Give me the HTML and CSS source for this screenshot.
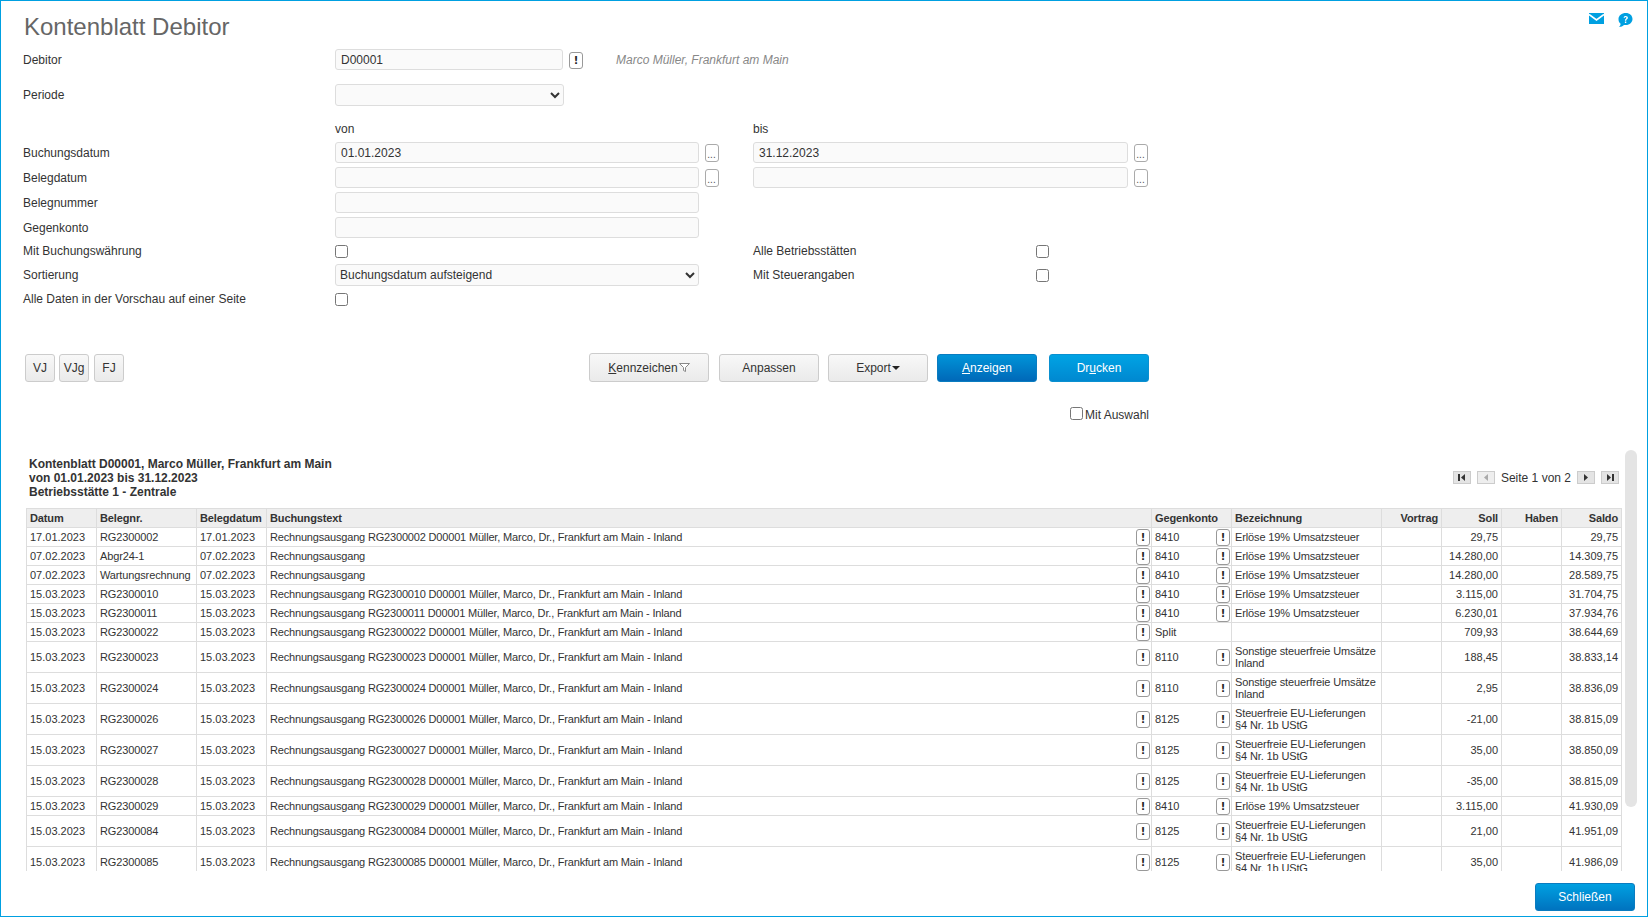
FILE: index.html
```html
<!DOCTYPE html>
<html lang="de">
<head>
  <meta charset="UTF-8">
  <meta name="viewport" content="width=device-width, initial-scale=1.0">
  <title>Kontenblatt Debitor</title>
  <link rel="stylesheet" href="styles.css">
</head>
<body>
<div class="window">
  <div class="page-head">
    <h1 class="page-title">Kontenblatt Debitor</h1>
    <div class="head-icons">
      <svg class="icon-mail" width="15" height="11" viewBox="0 0 15 11"><rect width="15" height="11" fill="#00a0e1"/><path d="M0 1.500L7.500 7 15 1.500" fill="none" stroke="#fff" stroke-width="1.600"/></svg>
      <svg class="icon-help" width="15" height="14" viewBox="0 0 15 14"><path d="M7.800 0C11.700 0 14.500 2.600 14.500 6c0 3.300-2.800 6-6.700 6H6C4.800 13.200 3.200 14 1 14c1-.8 1.500-1.800 1.600-3.200C1 9.600 .5 7.900 .5 6 .5 2.600 3.800 0 7.800 0z" fill="#00a0e1"/><path d="M5.600 4.800C5.700 3.500 6.600 3 7.700 3 9 3 9.900 3.700 9.900 4.800c0 1.500-1.700 1.500-1.700 3H6.900c0-2 1.500-2 1.500-3 0-.5-.3-.7-.7-.7-.5 0-.7.300-.8.700zM6.900 8.500h1.400V10H6.900z" fill="#fff"/></svg>
    </div>
  </div>

  <div class="form">
    <div class="form-row row-debitor">
      <label>Debitor</label>
      <div class="debitor-field">
        <input class="input input-short" type="text" value="D00001">
        <button class="mark-btn" type="button">!</button>
        <span class="debitor-name">Marco Müller, Frankfurt am Main</span>
      </div>
    </div>
    <div class="form-row row-periode">
      <label>Periode</label>
      <select class="input select input-period"><option></option></select>
    </div>
    <div class="form-row row-caption">
      <span></span>
      <span>von</span>
      <span></span>
      <span>bis</span>
    </div>
    <div class="form-row row-field">
      <label>Buchungsdatum</label>
      <input class="input" type="text" value="01.01.2023">
      <button class="dots-btn" type="button">...</button>
      <input class="input" type="text" value="31.12.2023">
      <button class="dots-btn" type="button">...</button>
    </div>
    <div class="form-row row-field">
      <label>Belegdatum</label>
      <input class="input" type="text">
      <button class="dots-btn" type="button">...</button>
      <input class="input" type="text">
      <button class="dots-btn" type="button">...</button>
    </div>
    <div class="form-row row-field">
      <label>Belegnummer</label>
      <input class="input" type="text">
    </div>
    <div class="form-row row-field">
      <label>Gegenkonto</label>
      <input class="input" type="text">
    </div>
    <div class="form-row row-check">
      <label>Mit Buchungswährung</label>
      <div><input type="checkbox"></div>
      <span></span>
      <div class="check-pair"><label>Alle Betriebsstätten</label><input type="checkbox"></div>
    </div>
    <div class="form-row row-select">
      <label>Sortierung</label>
      <select class="input select"><option>Buchungsdatum aufsteigend</option></select>
      <span></span>
      <div class="check-pair"><label>Mit Steuerangaben</label><input type="checkbox"></div>
    </div>
    <div class="form-row row-check">
      <label>Alle Daten in der Vorschau auf einer Seite</label>
      <div><input type="checkbox"></div>
    </div>
  </div>

  <div class="actions">
    <div class="quick-btns">
      <button class="btn btn-quick" type="button">VJ</button>
      <button class="btn btn-quick" type="button">VJg</button>
      <button class="btn btn-quick" type="button">FJ</button>
    </div>
    <div class="main-btns">
      <button class="btn btn-flag" type="button"><u>K</u>ennzeichen<svg class="icon-filter" width="11" height="9" viewBox="0 0 11 9"><path d="M.5.5h10L6.500 4.500V8.500L4.500 7.500V4.500z" fill="#fff" stroke="#888"/></svg></button>
      <button class="btn btn-adjust" type="button">Anpassen</button>
      <button class="btn btn-export" type="button">Export<span class="caret"></span></button>
      <button class="btn btn-primary btn-show" type="button"><u>A</u>nzeigen</button>
      <button class="btn btn-primary btn-print" type="button">Dr<u>u</u>cken</button>
    </div>
  </div>
  <div class="select-row">
    <input type="checkbox"><label>Mit Auswahl</label>
  </div>

  <div class="report">
    <div class="scroll-thumb"></div>
    <div class="report-head">
      <div class="report-title">Kontenblatt D00001, Marco Müller, Frankfurt am Main<br>von 01.01.2023 bis 31.12.2023<br>Betriebsstätte 1 - Zentrale</div>
      <div class="pager">
        <span class="pager-btn"><svg width="8" height="7" viewBox="0 0 8 7"><path d="M0 0h2v7H0zM7 0v7L3 3.500z" fill="#333"/></svg></span>
        <span class="pager-btn pager-off"><svg width="8" height="7" viewBox="0 0 8 7"><path d="M6 0v7L2 3.500z" fill="#aaa"/></svg></span>
        <span class="pager-text">Seite 1 von 2</span>
        <span class="pager-btn"><svg width="8" height="7" viewBox="0 0 8 7"><path d="M2 0v7l4-3.500z" fill="#333"/></svg></span>
        <span class="pager-btn"><svg width="8" height="7" viewBox="0 0 8 7"><path d="M1 0v7l4-3.500zM6 0h2v7H6z" fill="#333"/></svg></span>
      </div>
    </div>
    <table class="ledger">
      <colgroup>
        <col class="c-date"><col class="c-no"><col class="c-date"><col class="c-text"><col class="c-acc"><col class="c-desc"><col class="c-num"><col class="c-num"><col class="c-num"><col class="c-num">
      </colgroup>
      <thead>
        <tr><th>Datum</th><th>Belegnr.</th><th>Belegdatum</th><th>Buchungstext</th><th>Gegenkonto</th><th>Bezeichnung</th><th class="num">Vortrag</th><th class="num">Soll</th><th class="num">Haben</th><th class="num">Saldo</th></tr>
      </thead>
      <tbody>
        <tr><td>17.01.2023</td><td class="tight">RG2300002</td><td>17.01.2023</td><td class="text"><div class="cell-flex">Rechnungsausgang RG2300002 D00001 Müller, Marco, Dr., Frankfurt am Main - Inland<button class="mark-btn" type="button">!</button></div></td><td><div class="cell-flex">8410<button class="mark-btn" type="button">!</button></div></td><td class="tight">Erlöse 19% Umsatzsteuer</td><td></td><td class="num">29,75</td><td></td><td class="num">29,75</td></tr>
        <tr><td>07.02.2023</td><td class="tight">Abgr24-1</td><td>07.02.2023</td><td class="text"><div class="cell-flex">Rechnungsausgang<button class="mark-btn" type="button">!</button></div></td><td><div class="cell-flex">8410<button class="mark-btn" type="button">!</button></div></td><td class="tight">Erlöse 19% Umsatzsteuer</td><td></td><td class="num">14.280,00</td><td></td><td class="num">14.309,75</td></tr>
        <tr><td>07.02.2023</td><td class="tight">Wartungsrechnung</td><td>07.02.2023</td><td class="text"><div class="cell-flex">Rechnungsausgang<button class="mark-btn" type="button">!</button></div></td><td><div class="cell-flex">8410<button class="mark-btn" type="button">!</button></div></td><td class="tight">Erlöse 19% Umsatzsteuer</td><td></td><td class="num">14.280,00</td><td></td><td class="num">28.589,75</td></tr>
        <tr><td>15.03.2023</td><td class="tight">RG2300010</td><td>15.03.2023</td><td class="text"><div class="cell-flex">Rechnungsausgang RG2300010 D00001 Müller, Marco, Dr., Frankfurt am Main - Inland<button class="mark-btn" type="button">!</button></div></td><td><div class="cell-flex">8410<button class="mark-btn" type="button">!</button></div></td><td class="tight">Erlöse 19% Umsatzsteuer</td><td></td><td class="num">3.115,00</td><td></td><td class="num">31.704,75</td></tr>
        <tr><td>15.03.2023</td><td class="tight">RG2300011</td><td>15.03.2023</td><td class="text"><div class="cell-flex">Rechnungsausgang RG2300011 D00001 Müller, Marco, Dr., Frankfurt am Main - Inland<button class="mark-btn" type="button">!</button></div></td><td><div class="cell-flex">8410<button class="mark-btn" type="button">!</button></div></td><td class="tight">Erlöse 19% Umsatzsteuer</td><td></td><td class="num">6.230,01</td><td></td><td class="num">37.934,76</td></tr>
        <tr><td>15.03.2023</td><td class="tight">RG2300022</td><td>15.03.2023</td><td class="text"><div class="cell-flex">Rechnungsausgang RG2300022 D00001 Müller, Marco, Dr., Frankfurt am Main - Inland<button class="mark-btn" type="button">!</button></div></td><td>Split</td><td></td><td></td><td class="num">709,93</td><td></td><td class="num">38.644,69</td></tr>
        <tr class="tall"><td>15.03.2023</td><td class="tight">RG2300023</td><td>15.03.2023</td><td class="text"><div class="cell-flex">Rechnungsausgang RG2300023 D00001 Müller, Marco, Dr., Frankfurt am Main - Inland<button class="mark-btn" type="button">!</button></div></td><td><div class="cell-flex">8110<button class="mark-btn" type="button">!</button></div></td><td class="tight">Sonstige steuerfreie Umsätze Inland</td><td></td><td class="num">188,45</td><td></td><td class="num">38.833,14</td></tr>
        <tr class="tall"><td>15.03.2023</td><td class="tight">RG2300024</td><td>15.03.2023</td><td class="text"><div class="cell-flex">Rechnungsausgang RG2300024 D00001 Müller, Marco, Dr., Frankfurt am Main - Inland<button class="mark-btn" type="button">!</button></div></td><td><div class="cell-flex">8110<button class="mark-btn" type="button">!</button></div></td><td class="tight">Sonstige steuerfreie Umsätze Inland</td><td></td><td class="num">2,95</td><td></td><td class="num">38.836,09</td></tr>
        <tr class="tall"><td>15.03.2023</td><td class="tight">RG2300026</td><td>15.03.2023</td><td class="text"><div class="cell-flex">Rechnungsausgang RG2300026 D00001 Müller, Marco, Dr., Frankfurt am Main - Inland<button class="mark-btn" type="button">!</button></div></td><td><div class="cell-flex">8125<button class="mark-btn" type="button">!</button></div></td><td class="tight">Steuerfreie EU-Lieferungen<br>§4 Nr. 1b UStG</td><td></td><td class="num">-21,00</td><td></td><td class="num">38.815,09</td></tr>
        <tr class="tall"><td>15.03.2023</td><td class="tight">RG2300027</td><td>15.03.2023</td><td class="text"><div class="cell-flex">Rechnungsausgang RG2300027 D00001 Müller, Marco, Dr., Frankfurt am Main - Inland<button class="mark-btn" type="button">!</button></div></td><td><div class="cell-flex">8125<button class="mark-btn" type="button">!</button></div></td><td class="tight">Steuerfreie EU-Lieferungen<br>§4 Nr. 1b UStG</td><td></td><td class="num">35,00</td><td></td><td class="num">38.850,09</td></tr>
        <tr class="tall"><td>15.03.2023</td><td class="tight">RG2300028</td><td>15.03.2023</td><td class="text"><div class="cell-flex">Rechnungsausgang RG2300028 D00001 Müller, Marco, Dr., Frankfurt am Main - Inland<button class="mark-btn" type="button">!</button></div></td><td><div class="cell-flex">8125<button class="mark-btn" type="button">!</button></div></td><td class="tight">Steuerfreie EU-Lieferungen<br>§4 Nr. 1b UStG</td><td></td><td class="num">-35,00</td><td></td><td class="num">38.815,09</td></tr>
        <tr><td>15.03.2023</td><td class="tight">RG2300029</td><td>15.03.2023</td><td class="text"><div class="cell-flex">Rechnungsausgang RG2300029 D00001 Müller, Marco, Dr., Frankfurt am Main - Inland<button class="mark-btn" type="button">!</button></div></td><td><div class="cell-flex">8410<button class="mark-btn" type="button">!</button></div></td><td class="tight">Erlöse 19% Umsatzsteuer</td><td></td><td class="num">3.115,00</td><td></td><td class="num">41.930,09</td></tr>
        <tr class="tall"><td>15.03.2023</td><td class="tight">RG2300084</td><td>15.03.2023</td><td class="text"><div class="cell-flex">Rechnungsausgang RG2300084 D00001 Müller, Marco, Dr., Frankfurt am Main - Inland<button class="mark-btn" type="button">!</button></div></td><td><div class="cell-flex">8125<button class="mark-btn" type="button">!</button></div></td><td class="tight">Steuerfreie EU-Lieferungen<br>§4 Nr. 1b UStG</td><td></td><td class="num">21,00</td><td></td><td class="num">41.951,09</td></tr>
        <tr class="tall"><td>15.03.2023</td><td class="tight">RG2300085</td><td>15.03.2023</td><td class="text"><div class="cell-flex">Rechnungsausgang RG2300085 D00001 Müller, Marco, Dr., Frankfurt am Main - Inland<button class="mark-btn" type="button">!</button></div></td><td><div class="cell-flex">8125<button class="mark-btn" type="button">!</button></div></td><td class="tight">Steuerfreie EU-Lieferungen<br>§4 Nr. 1b UStG</td><td></td><td class="num">35,00</td><td></td><td class="num">41.986,09</td></tr>
      </tbody>
    </table>
  </div>

  <div class="footer">
    <button class="btn btn-primary btn-close" type="button">Schließen</button>
  </div>
</div>
</body>
</html>
```

FILE: styles.css
```css
* {
  box-sizing: border-box;
}

body {
  margin: 0;
  font-family: "Liberation Sans", Arial, sans-serif;
  font-size: 12px;
  color: #333;
  background: #fff;
}

.window {
  height: 917px;
  border: 1px solid #00a0e1;
  display: flex;
  flex-direction: column;
  overflow: hidden;
}

/* Kopf */
.page-head {
  height: 48px;
  padding: 12px 14px 0 23px;
  display: flex;
  justify-content: space-between;
  align-items: flex-start;
}

.page-title {
  margin: 0;
  font-size: 24px;
  font-weight: normal;
  line-height: 27px;
  color: #666;
}

.head-icons {
  display: flex;
  gap: 14px;
  align-items: flex-start;
}

/* Formular */
.form {
  padding-left: 22px;
}

.form-row {
  display: grid;
  grid-template-columns: 312px 364px 54px 375px 30px;
  align-items: center;
}

.row-debitor {
  height: 22px;
  margin-bottom: 13px;
}

.row-periode {
  height: 22px;
  margin-bottom: 12px;
}

.row-caption {
  height: 22px;
  margin-bottom: 2px;
}

.row-field {
  height: 21px;
  margin-bottom: 4px;
}

.row-check {
  height: 18px;
  margin-bottom: 4px;
}

.row-select {
  height: 22px;
  margin-bottom: 4px;
}

.debitor-field {
  display: flex;
  align-items: center;
  grid-column: 2 / 5;
}

.debitor-name {
  margin-left: 33px;
  font-style: italic;
  color: #888;
}

.input {
  width: 100%;
  height: 21px;
  padding: 0 5px;
  border: 1px solid #ddd;
  border-radius: 3px;
  background: #fafafa;
  font: 12px "Liberation Sans", Arial, sans-serif;
  color: #333;
}

.input-short {
  width: 228px;
  flex: none;
  margin-top: -1px;
}

.select {
  height: 22px;
  padding: 0;
}

.input-period {
  width: 229px;
}

input[type="checkbox"] {
  display: block;
  width: 13px;
  height: 13px;
  margin: 0;
}

.check-pair {
  display: grid;
  grid-template-columns: 283px 13px;
  align-items: center;
}

.mark-btn {
  flex: none;
  width: 14px;
  height: 17px;
  padding: 0;
  border: 1px solid #999;
  border-radius: 3px;
  background: #fff;
  font: bold 10px/15px "DejaVu Sans", sans-serif;
  color: #222;
  letter-spacing: 0;
}

.debitor-field .mark-btn {
  margin-left: 6px;
}

.dots-btn {
  width: 14px;
  height: 18px;
  margin-left: 5.500px;
  padding: 4px 0 0;
  border: 1px solid #aaa;
  border-radius: 3px;
  background: #fff;
  font: 10px/12px "Liberation Sans", Arial, sans-serif;
  color: #555;
}

/* Schaltflächen */
.actions {
  margin-top: 41px;
  width: 1148px;
  height: 29px;
  padding-left: 24px;
  display: flex;
  justify-content: space-between;
  align-items: flex-end;
}

.quick-btns {
  display: flex;
  gap: 4px;
}

.btn-quick:last-child {
  margin-left: 1px;
}

.main-btns {
  display: flex;
  align-items: flex-end;
}

.btn {
  height: 28px;
  padding: 0;
  border: 1px solid #ccc;
  border-radius: 3px;
  background: linear-gradient(#f8f8f8, #eaeaea);
  font: 12px "Liberation Sans", Arial, sans-serif;
  color: #333;
}

.btn-quick {
  width: 30px;
}

.btn-flag {
  width: 120px;
  height: 29px;
}

.icon-filter {
  margin-left: 1px;
}

.btn-adjust {
  width: 100px;
  margin-left: 10px;
}

.btn-export {
  width: 100px;
  margin-left: 9px;
}

.caret {
  display: inline-block;
  margin-left: 1px;
  vertical-align: 2px;
  border: 4px solid transparent;
  border-top-color: #222;
  border-bottom: 0;
}

.btn-primary {
  border-color: #0a7cc0;
  background: linear-gradient(#00a0e1, #0073bf);
  color: #fff;
}

.btn-show {
  width: 100px;
  margin-left: 9px;
  background: linear-gradient(#0094d8, #0068b8);
}

.btn-print {
  width: 100px;
  margin-left: 12px;
  border-color: #0a90d0;
  background: linear-gradient(#00a3e4, #0088d0);
}

.select-row {
  width: 1148px;
  height: 14px;
  margin-top: 26px;
  display: flex;
  justify-content: flex-end;
  align-items: center;
  gap: 2px;
}

.select-row input {
  margin-top: -3px;
}

/* Bericht */
.report {
  position: relative;
  height: 421px;
  margin-top: 28px;
  padding: 7px 0 0 25px;
  overflow: hidden;
}

.scroll-thumb {
  position: absolute;
  top: 0;
  left: 1624px;
  width: 12px;
  height: 357px;
  border-radius: 6px;
  background: #e4e4e4;
}

.report-head {
  width: 1595px;
  height: 42px;
  margin-bottom: 9px;
  display: flex;
  justify-content: space-between;
}

.report-title {
  padding-left: 3px;
  font-weight: bold;
  line-height: 14px;
}

.pager {
  height: 13px;
  margin: 14px 2px 0 0;
  display: flex;
  align-items: center;
}

.pager-btn {
  width: 18px;
  height: 13px;
  margin-left: 6px;
  border: 1px solid #ccc;
  background: #e4e4e4;
  display: flex;
  align-items: center;
  justify-content: center;
}

.pager-off {
  background: #eee;
}

.pager-text {
  margin-left: 6px;
}

.ledger {
  width: 1595px;
  table-layout: fixed;
  border-collapse: collapse;
  font-size: 11px;
  line-height: 12px;
}

.c-date { width: 70px; }
.c-no { width: 100px; }
.c-text { width: 885px; }
.c-acc { width: 80px; }
.c-desc { width: 150px; }
.c-num { width: 60px; }

.ledger th,
.ledger td {
  height: 19px;
  padding: 0 3px;
  border: 1px solid #ddd;
  text-align: left;
  overflow: hidden;
}

.ledger th {
  background: #eee;
  font-weight: bold;
  letter-spacing: -0.13px;
}

.ledger .num {
  padding-right: 3px;
  text-align: right;
}

.ledger .tall td {
  height: 31px;
}

.ledger .tight {
  letter-spacing: -0.13px;
}

.ledger .text {
  letter-spacing: -0.175px;
}

.cell-flex {
  margin-right: -2px;
  display: flex;
  justify-content: space-between;
  align-items: center;
}

/* Fuss */
.footer {
  flex: 1;
  padding: 12px 12px 0 0;
  display: flex;
  justify-content: flex-end;
  align-items: flex-start;
}

.btn-close {
  width: 100px;
  height: 28px;
  font-size: 12px;
}
```
